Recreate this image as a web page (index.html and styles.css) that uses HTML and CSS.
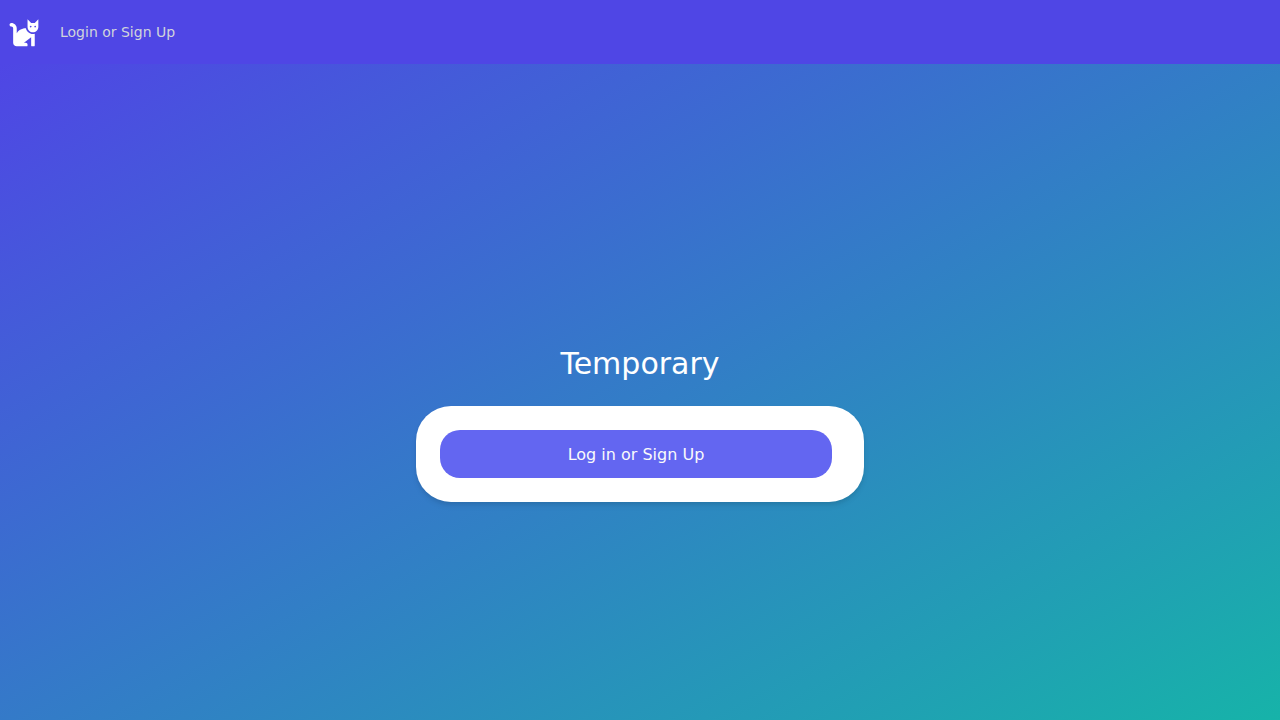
FILE: index.html
```html
<!DOCTYPE html>
<html lang="en">
<head>
  <meta charset="utf-8">
  <title>Temporary</title>
  <link rel="stylesheet" href="styles.css">
</head>
<body>
  <nav class="nav">
    <a class="logo" href="#" aria-label="Home">
      <svg viewBox="8 8 512 512" fill="currentColor"><path d="M290.59 192c-20.18 0-106.82 1.98-162.59 85.95V192c0-52.94-43.06-96-96-96-17.67 0-32 14.33-32 32s14.33 32 32 32c17.64 0 32 14.36 32 32v256c0 35.3 28.7 64 64 64h176c8.84 0 16-7.16 16-16v-16c0-17.67-14.33-32-32-32h-32l128-96v144c0 8.84 7.16 16 16 16h32c8.84 0 16-7.16 16-16V289.86c-10.29 2.67-20.89 4.54-32 4.54-61.81 0-113.52-44.05-125.41-102.4zM448 96h-64l-64-64v134.4c0 53.02 42.98 96 96 96s96-42.98 96-96V32l-64 64zm-72 80c-8.84 0-16-7.16-16-16s7.16-16 16-16 16 7.16 16 16-7.16 16-16 16zm80 0c-8.84 0-16-7.16-16-16s7.16-16 16-16 16 7.16 16 16-7.16 16-16 16z"/></svg>
    </a>
    <a class="nav-link" href="#">Login or Sign Up</a>
  </nav>
  <main class="hero">
    <h1 class="title">Temporary</h1>
    <div class="card">
      <button class="button" type="button">Log in or Sign Up</button>
    </div>
  </main>
</body>
</html>
```
FILE: styles.css
```css
* {
  box-sizing: border-box;
}

html {
  height: 100%;
  overflow: hidden;
}

body {
  height: 100%;
  margin: 0;
  overflow: hidden;
  font-family: "DejaVu Sans", sans-serif;
}

.nav {
  display: flex;
  align-items: center;
  height: 64px;
  padding-left: 10px;
  background: #4f46e5;
}

.logo {
  display: flex;
  margin-right: 21.2px;
  color: #fff;
}

.logo svg {
  width: 28.8px;
  height: 28.8px;
  overflow: visible;
}

.nav-link {
  color: #d1d5db;
  font-size: 14px;
  line-height: 20px;
  text-decoration: none;
}

.hero {
  display: flex;
  flex-direction: column;
  align-items: center;
  height: calc(100vh - 64px);
  padding-top: calc(50vh - 78px);
  background: linear-gradient(to bottom right, #4f46e5, #14b8a6) 0 0 / 100% 100vh no-repeat;
}

.title {
  margin: 0 0 24px;
  color: #fff;
  font-size: 30px;
  font-weight: 400;
  line-height: 36px;
}

.card {
  width: 448px;
  padding: 24px 32px 24px 24px;
  border-radius: 35px;
  background: #fff;
  box-shadow: 0 4px 6px -1px rgba(0, 0, 0, 0.1), 0 2px 4px -1px rgba(0, 0, 0, 0.06);
}

.button {
  display: block;
  width: 100%;
  height: 48px;
  padding: 1px 0 0;
  border: 0;
  border-radius: 20px;
  background: #6366f1;
  color: #f9fafb;
  font: 16px/24px "DejaVu Sans", sans-serif;
}
```
